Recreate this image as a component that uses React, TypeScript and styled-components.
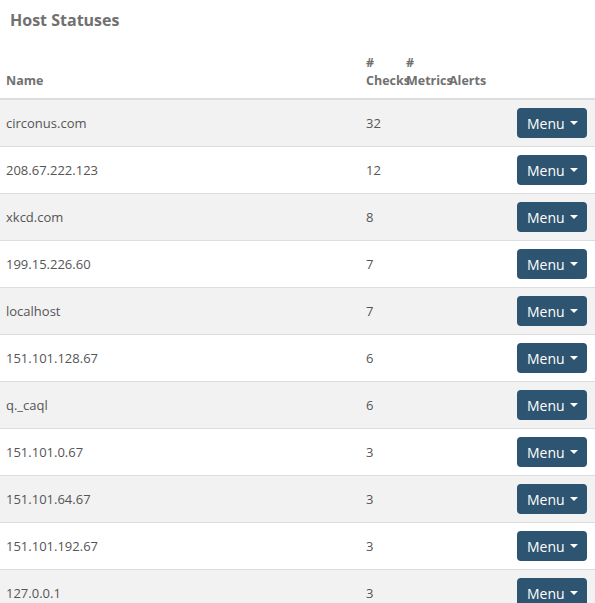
import React from "react";
import styled, { createGlobalStyle } from "styled-components";

const GlobalStyle = createGlobalStyle`
  body {
    margin: 0;
    background: #fff;
    font-family: "Open Sans", "Liberation Sans", sans-serif;
    color: #555;
  }
`;

const Page = styled.div`
  width: 595px;
  overflow: hidden;
`;

const Title = styled.h3`
  margin: 0;
  padding: 10px 10px 16px;
  font-size: 16px;
  line-height: 20px;
  font-weight: 700;
  color: #707070;
`;

const Table = styled.table`
  width: 100%;
  border-collapse: collapse;
  table-layout: fixed;
  font-size: 13px;
`;

const HeadCell = styled.th<{ $align?: string }>`
  padding: 8px 6px;
  text-align: ${(p) => p.$align || "left"};
  vertical-align: bottom;
  font-weight: 700;
  font-size: 12.5px;
  line-height: 18px;
  color: #707070;
  border-bottom: 2px solid #ddd;
  white-space: nowrap;
`;

const Row = styled.tr<{ $striped: boolean }>`
  background: ${(p) => (p.$striped ? "#f2f2f2" : "#fff")};
`;

const Cell = styled.td<{ $align?: string }>`
  padding: 8px 6px;
  height: 30px;
  text-align: ${(p) => p.$align || "left"};
  vertical-align: middle;
  border-bottom: 1px solid #ddd;
  line-height: 18px;
  color: #555;
  white-space: nowrap;
`;

const MenuCell = styled(Cell)`
  padding-right: 8px;
  text-align: right;
`;

const MenuButton = styled.button`
  display: inline-flex;
  align-items: center;
  gap: 5px;
  height: 30px;
  width: 70px;
  padding: 0 8px 0 10px;
  border: none;
  border-radius: 4px;
  background: #2d5470;
  color: #fff;
  font-family: "Open Sans", "Liberation Sans", sans-serif;
  font-size: 14px;
  font-weight: 500;
  cursor: pointer;
`;

const Caret = styled.span`
  width: 0;
  height: 0;
  border-left: 4px solid transparent;
  border-right: 4px solid transparent;
  border-top: 4px solid #fff;
`;

const hosts = [
  { name: "circonus.com", checks: 32 },
  { name: "208.67.222.123", checks: 12 },
  { name: "xkcd.com", checks: 8 },
  { name: "199.15.226.60", checks: 7 },
  { name: "localhost", checks: 7 },
  { name: "151.101.128.67", checks: 6 },
  { name: "q._caql", checks: 6 },
  { name: "151.101.0.67", checks: 3 },
  { name: "151.101.64.67", checks: 3 },
  { name: "151.101.192.67", checks: 3 },
  { name: "127.0.0.1", checks: 3 },
];

export default function App() {
  return (
    <Page>
      <GlobalStyle />
      <Title>Host Statuses</Title>
      <Table>
        <colgroup>
          <col style={{ width: 360 }} />
          <col style={{ width: 40 }} />
          <col style={{ width: 43 }} />
          <col style={{ width: 47 }} />
          <col />
        </colgroup>
        <thead>
          <tr>
            <HeadCell>Name</HeadCell>
            <HeadCell>
              #<br />
              Checks
            </HeadCell>
            <HeadCell>
              #<br />
              Metrics
            </HeadCell>
            <HeadCell>Alerts</HeadCell>
            <HeadCell />
          </tr>
        </thead>
        <tbody>
          {hosts.map((h, i) => (
            <Row key={h.name} $striped={i % 2 === 0}>
              <Cell>{h.name}</Cell>
              <Cell>{h.checks}</Cell>
              <Cell />
              <Cell />
              <MenuCell>
                <MenuButton>
                  Menu <Caret />
                </MenuButton>
              </MenuCell>
            </Row>
          ))}
        </tbody>
      </Table>
    </Page>
  );
}
